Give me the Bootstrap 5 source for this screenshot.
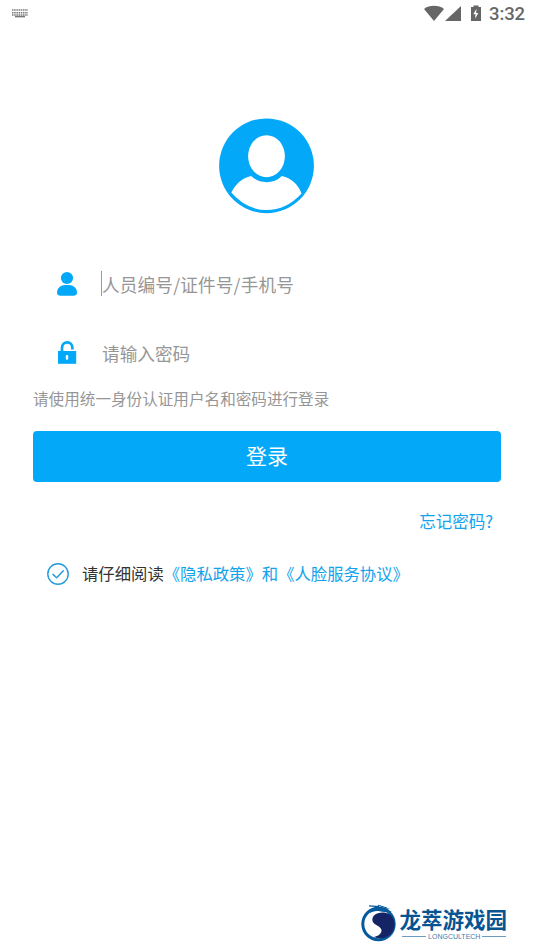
<!DOCTYPE html>
<html lang="zh-CN">
<head>
<meta charset="utf-8">
<meta name="viewport" content="width=device-width, initial-scale=1">
<title>登录</title>
<link href="https://cdn.jsdelivr.net/npm/bootstrap@5.3.0/dist/css/bootstrap.min.css" rel="stylesheet">
<style>
  :root { --sky: #03a9f8; --link: #12a3ec; --hint: #969696; }
  body { font-family: "Noto Sans CJK SC", sans-serif; background: #fff; color: #333; height: 950px; overflow: hidden; }
  svg { display: block; flex: none; }
  .status { height: 28px; padding: 0 9px 1px 12px; color: #666; }
  .clock { font: 500 18.5px/28px Roboto, sans-serif; letter-spacing: -.1px; margin-left: 7px; }
  .avatar { margin: 90px 0 0 219px; }
  .login-form { padding: 35px 33px 0; }
  .field { height: 69px; padding-left: 23px; gap: 24px; }
  .field-input { font-size: 17.65px; line-height: 26px; color: var(--hint); padding-top: 2px; }
  .account { letter-spacing: .15px; }
  .caret { width: 1px; height: 25px; background: #999; margin: 0 0 0 -1px; }
  .tip { font-size: 15.6px; line-height: 22px; color: var(--hint); }
  .login-btn { height: 51px; margin-top: 22px; background: var(--sky); color: #fff; border: 0; border-radius: 4px; font-size: 21px; line-height: 30px; padding: 0 0 3px; }
  .login-btn:hover { background: var(--sky); color: #fff; }
  .forgot { font-size: 16.5px; line-height: 24px; margin-top: 27px; padding-right: 8px; }
  .forgot a, .agree a { color: var(--link); text-decoration: none; }
  .agree { margin-top: 29px; padding-left: 14px; gap: 13px; font-size: 16.35px; line-height: 24px; }
  .agree-text { line-height: 22px; padding-bottom: 2px; }
  .brand { padding: 0 27px 8px 0; gap: 2px; color: #075492; }
  .brand-name { font-size: 21.5px; line-height: 26px; font-weight: 700; }
  .brand-sub { font: 7px/9px "Liberation Sans", sans-serif; color: #3f7cad; gap: 2px; padding: 0 1px 0 3px; }
  .rule { height: 1px; background: #6f9dc2; }
</style>
</head>
<body class="d-flex flex-column">
  <header class="status d-flex align-items-center">
    <svg width="16" height="9" viewBox="0 0 16 9" fill="none" stroke="#777">
      <path d="M0 1h16M0 3.7h16M0 6h16" stroke-width="1.4" stroke-dasharray="1.5 .7"/>
      <path d="M3 7.6h10" stroke-width="1.5"/>
    </svg>
    <svg class="ms-auto" width="58" height="18" viewBox="0 0 58 18" fill="#666">
      <path d="M0 4C5-.3 15-.3 20 4L10 16z"/>
      <path d="M37 1v15H21z"/>
      <path d="M47 2h2.500V.5h5V2H57v14H47z"/>
      <path d="M52.500 3.800l-3.200 5.500h2.200l-.4 4.500 3.200-5.700h-2.200z" fill="#fff"/>
    </svg>
    <span class="clock">3:32</span>
  </header>

  <svg class="avatar" width="95" height="96" viewBox="0 0 95 96">
    <circle cx="47.5" cy="47.800" r="47.4" fill="#03a9f8"/>
    <ellipse cx="47.5" cy="38.2" rx="18.4" ry="21" fill="#fff"/>
    <path d="M12.300 74.500C16 67 23 59.800 32.200 58Q38.500 64.200 47.500 64.200T63 58C72 60 79 66 82.500 75.500Q67.500 92 47.500 92T12.300 74.500Z" fill="#fff"/>
  </svg>

  <main class="login-form">
    <div class="field d-flex align-items-center">
      <svg width="22" height="26" viewBox="0 0 22 26" fill="#03a9f8">
        <circle cx="11" cy="7" r="6.100"/>
        <path d="M1 21.500C1 17 5 14 9 14h4c4 0 8 3 8 7.500 0 2.200-1.500 3.200-3.500 3.200h-13C2.500 24.700 1 23.700 1 21.500z"/>
      </svg>
      <div class="d-flex align-items-center"><span class="caret"></span><span class="field-input account">人员编号/证件号/手机号</span></div>
    </div>
    <div class="field d-flex align-items-center">
      <svg width="22" height="26" viewBox="0 0 22 26">
        <path d="M6 13V8C6 .5 16.400.5 16.400 8v1.500" fill="none" stroke="#03a9f8" stroke-width="2.700"/>
        <path d="M2 11h18.200v12.800H2z" fill="#03a9f8"/>
        <rect x="9.800" y="15" width="2.400" height="4.800" rx="1.100" fill="#fff"/>
      </svg>
      <span class="field-input">请输入密码</span>
    </div>
    <div class="tip">请使用统一身份认证用户名和密码进行登录</div>
    <button type="button" class="btn login-btn w-100">登录</button>
    <div class="forgot text-end"><a href="#">忘记密码?</a></div>
    <div class="agree d-flex align-items-center">
      <svg width="22" height="22" viewBox="0 0 22 22" fill="none" stroke="#259bdf" stroke-linecap="round" stroke-linejoin="round">
        <circle cx="11" cy="11" r="10.200" stroke-width="1.400"/>
        <path d="M6 11.400l3.700 3.300 6.600-7" stroke-width="1.500"/>
      </svg>
      <div class="agree-text text-nowrap">请仔细阅读<a href="#">《隐私政策》和《人脸服务协议》</a></div>
    </div>
  </main>

  <footer class="brand d-flex align-items-center justify-content-end mt-auto">
    <svg width="36" height="38" viewBox="0 0 36 38">
      <circle cx="17.500" cy="20" r="15.700" fill="none" stroke="#075a9b" stroke-width="3"/>
      <path d="M23 8.500C15 8 10.500 12 11.500 17C12.500 21.500 21 22 20.500 27C20 30.500 16 32.500 12.500 33C24 37.500 33.500 30 33.500 20.500C33.500 14 29.500 9 23 8.500z" fill="#152464"/>
      <path d="M9 7C13 3 18 2.500 22 4l7 .8-3 1.200 5 1.500C25 9.500 20 7 17 7c-4-.2-6 1-8 2z" fill="#075a9b"/>
      <path d="M8 1.800l10 .8M17 1.200l9 2.800" stroke="#075a9b" stroke-width="1.200"/>
    </svg>
    <div>
      <div class="brand-name">龙萃游戏园</div>
      <div class="brand-sub d-flex align-items-center"><span class="rule flex-fill"></span><span>LONGCULTECH</span><span class="rule flex-fill"></span></div>
    </div>
  </footer>
<script src="https://cdn.jsdelivr.net/npm/bootstrap@5.3.0/dist/js/bootstrap.bundle.min.js"></script>
</body>
</html>
